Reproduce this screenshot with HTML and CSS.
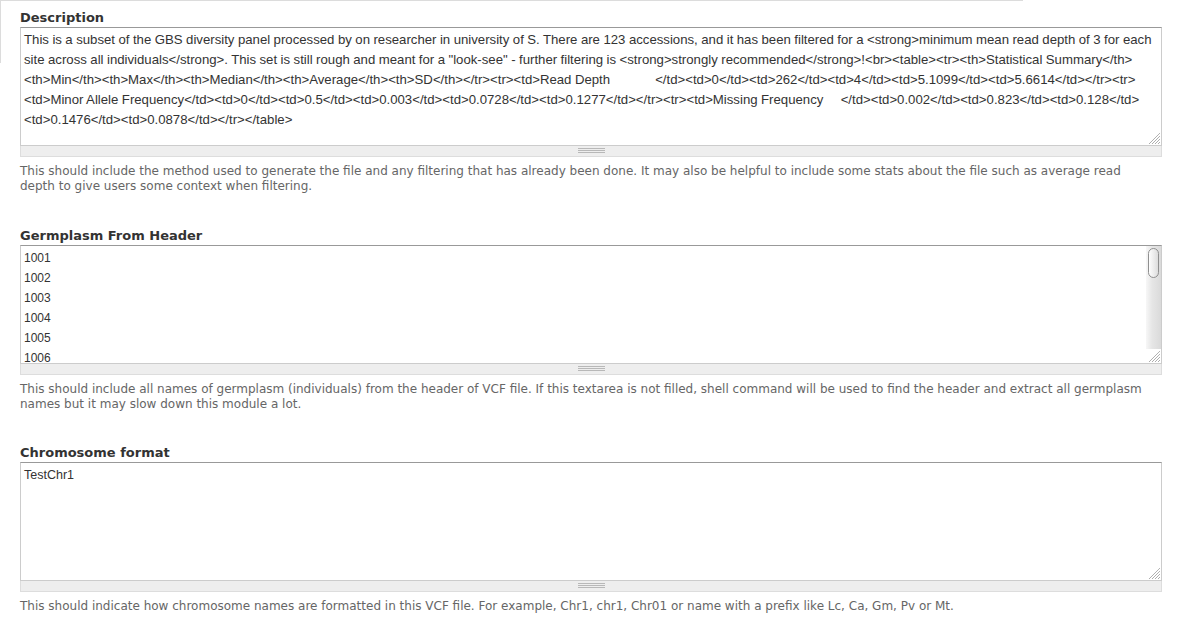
FILE: index.html
```html
<!DOCTYPE html>
<html>
<head>
<meta charset="utf-8">
<link rel="stylesheet" href="styles.css">
</head>
<body>
<div class="edge"></div>
<form class="form">
  <div class="form-item">
    <label class="label" for="desc">Description</label>
    <div class="ta-wrap">
      <textarea id="desc" class="ta ta-desc" wrap="off">This is a subset of the GBS diversity panel processed by on researcher in university of S. There are 123 accessions, and it has been filtered for a &lt;strong&gt;minimum mean read depth of 3 for each
site across all individuals&lt;/strong&gt;. This set is still rough and meant for a "look-see" - further filtering is &lt;strong&gt;strongly recommended&lt;/strong&gt;!&lt;br&gt;&lt;table&gt;&lt;tr&gt;&lt;th&gt;Statistical Summary&lt;/th&gt;
&lt;th&gt;Min&lt;/th&gt;&lt;th&gt;Max&lt;/th&gt;&lt;th&gt;Median&lt;/th&gt;&lt;th&gt;Average&lt;/th&gt;&lt;th&gt;SD&lt;/th&gt;&lt;/tr&gt;&lt;tr&gt;&lt;td&gt;Read Depth             &lt;/td&gt;&lt;td&gt;0&lt;/td&gt;&lt;td&gt;262&lt;/td&gt;&lt;td&gt;4&lt;/td&gt;&lt;td&gt;5.1099&lt;/td&gt;&lt;td&gt;5.6614&lt;/td&gt;&lt;/tr&gt;&lt;tr&gt;
&lt;td&gt;Minor Allele Frequency&lt;/td&gt;&lt;td&gt;0&lt;/td&gt;&lt;td&gt;0.5&lt;/td&gt;&lt;td&gt;0.003&lt;/td&gt;&lt;td&gt;0.0728&lt;/td&gt;&lt;td&gt;0.1277&lt;/td&gt;&lt;/tr&gt;&lt;tr&gt;&lt;td&gt;Missing Frequency     &lt;/td&gt;&lt;td&gt;0.002&lt;/td&gt;&lt;td&gt;0.823&lt;/td&gt;&lt;td&gt;0.128&lt;/td&gt;
&lt;td&gt;0.1476&lt;/td&gt;&lt;td&gt;0.0878&lt;/td&gt;&lt;/tr&gt;&lt;/table&gt;</textarea>
      <svg class="hatch" width="13" height="13" viewBox="0 0 13 13"><path d="M1 12L12 1M4 12L12 4M7 12L12 7M10 12L12 10" stroke="#8c8c8c" stroke-width="1" stroke-dasharray="1 0.4" fill="none"/></svg>
    </div>
    <div class="grippie"></div>
    <div class="description">This should include the method used to generate the file and any filtering that has already been done. It may also be helpful to include some stats about the file such as average read depth to give users some context when filtering.</div>
  </div>
  <div class="form-item">
    <label class="label" for="germ">Germplasm From Header</label>
    <div class="ta-wrap">
      <textarea id="germ" class="ta ta-list">1001
1002
1003
1004
1005
1006
1007
1008
1009
1010
1011
1012
1013
1014
1015
1016
1017
1018
1019
1020</textarea>
      <div class="scrollbar"><div class="thumb"></div></div>
      <svg class="hatch" width="13" height="13" viewBox="0 0 13 13"><path d="M1 12L12 1M4 12L12 4M7 12L12 7M10 12L12 10" stroke="#8c8c8c" stroke-width="1" stroke-dasharray="1 0.4" fill="none"/></svg>
    </div>
    <div class="grippie"></div>
    <div class="description">This should include all names of germplasm (individuals) from the header of VCF file. If this textarea is not filled, shell command will be used to find the header and extract all germplasm names but it may slow down this module a lot.</div>
  </div>
  <div class="form-item">
    <label class="label" for="chr">Chromosome format</label>
    <div class="ta-wrap">
      <textarea id="chr" class="ta ta-chr">TestChr1</textarea>
      <svg class="hatch" width="13" height="13" viewBox="0 0 13 13"><path d="M1 12L12 1M4 12L12 4M7 12L12 7M10 12L12 10" stroke="#8c8c8c" stroke-width="1" stroke-dasharray="1 0.4" fill="none"/></svg>
    </div>
    <div class="grippie"></div>
    <div class="description">This should indicate how chromosome names are formatted in this VCF file. For example, Chr1, chr1, Chr01 or name with a prefix like Lc, Ca, Gm, Pv or Mt.</div>
  </div>
</form>
</body>
</html>
```

FILE: styles.css
```css
html, body {
  margin: 0;
  padding: 0;
  background: #fff;
}

body {
  font-family: "DejaVu Sans", sans-serif;
  color: #333;
}

.edge {
  position: absolute;
  left: 0;
  top: 0;
  width: 1023px;
  height: 63px;
  border-top: 1px solid #dcdcdc;
  border-left: 1px solid #dcdcdc;
  box-sizing: border-box;
  pointer-events: none;
}

.form {
  position: relative;
  padding: 9px 24px 0 20px;
}

.form-item {
  margin-bottom: 32.5px;
}

.label {
  display: block;
  font-family: "DejaVu Sans", sans-serif;
  font-weight: bold;
  font-size: 13px;
  line-height: 18px;
  color: #333;
}

.ta-wrap {
  position: relative;
  display: flex;
}

.ta {
  flex: 1;
  display: block;
  box-sizing: border-box;
  height: 119px;
  margin: 0;
  padding: 2px 3px;
  border: 1px solid #ccc;
  border-top-color: #999;
  font-family: "Liberation Sans", Arial, sans-serif;
  font-size: 12px;
  line-height: 20px;
  color: #333;
  background: #fff;
  resize: none;
  outline: none;
  overflow: hidden;
}

.ta-desc {
  font-size: 13.2px;
  word-spacing: -0.2px;
}

.ta-chr {
  font-size: 12.5px;
}

.scrollbar {
  position: absolute;
  top: 1px;
  right: 1px;
  bottom: 15px;
  width: 15px;
  box-sizing: border-box;
  padding: 2px 2px 0 2px;
  background: linear-gradient(to right, #f7f7f7, #e6e6e6 40%, #dadada);
}

.thumb {
  height: 30px;
  box-sizing: border-box;
  border: 1px solid #8f8f8f;
  border-radius: 6px;
  background: linear-gradient(to right, #fdfdfd, #eaeaea 60%, #dcdcdc);
}

.hatch {
  position: absolute;
  right: 1px;
  bottom: 1px;
  display: block;
}

.grippie {
  height: 10px;
  border: 1px solid #ddd;
  border-top: 0;
  background-color: #eee;
  background-image: repeating-linear-gradient(to bottom, #b8b8b8 0 1px, transparent 1px 2px);
  background-size: 27px 5px;
  background-repeat: no-repeat;
  background-position: center 2px;
}

.description {
  margin-top: 7px;
  padding-right: 4px;
  font-family: "DejaVu Sans", sans-serif;
  font-size: 12px;
  line-height: 15px;
  color: #666;
}
```
